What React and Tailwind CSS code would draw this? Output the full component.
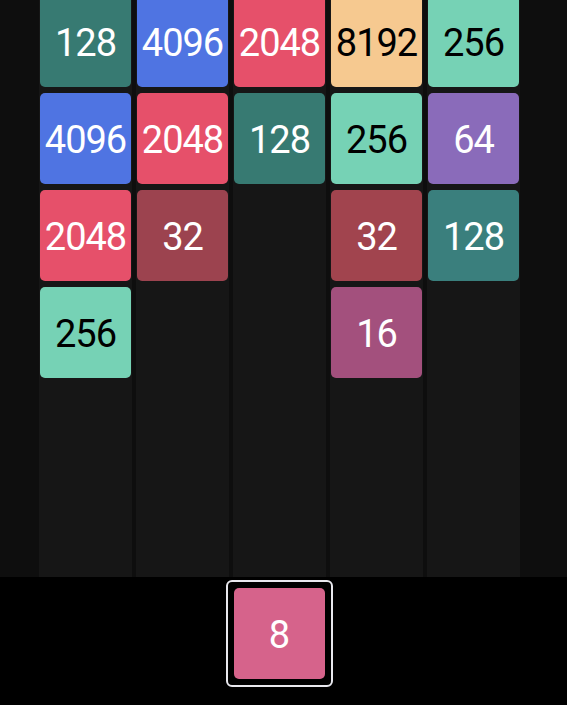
const COLORS = {
  16: { bg: 'bg-[#a3507d]', text: 'text-white' },
  32: { bg: 'bg-[#9c434f]', text: 'text-white' },
  64: { bg: 'bg-[#8a6bba]', text: 'text-white' },
  128: { bg: 'bg-[#377a72]', text: 'text-white' },
  256: { bg: 'bg-[#76d2b5]', text: 'text-black' },
  2048: { bg: 'bg-[#e6506a]', text: 'text-white' },
  4096: { bg: 'bg-[#4f74e2]', text: 'text-white' },
  8192: { bg: 'bg-[#f6c990]', text: 'text-black' },
  8: { bg: 'bg-[#d6638b]', text: 'text-white' },
}

const columns = [
  [128, 4096, 2048, 256],
  [4096, 2048, 32],
  [2048, 128],
  [8192, 256, 32, 16],
  [256, 64, 128],
]

function Tile({ value, first, tint }) {
  const c = COLORS[value]
  return (
    <div
      className={`w-[91px] h-[91px] shrink-0 rounded-[5px] flex items-center justify-center pt-[3px] text-[38px] font-normal tracking-[-1px] ${tint || c.bg} ${c.text} ${first ? '-mt-[4px]' : ''}`}
    >
      {value}
    </div>
  )
}

export default function App() {
  return (
    <div
      className="w-[567px] h-[705px] overflow-hidden bg-[#0e0e0e] flex flex-col"
      style={{ fontFamily: 'Roboto, "Open Sans", sans-serif' }}
    >
      <div className="h-[577px] shrink-0 pl-[39px] flex gap-[4px]">
        {columns.map((col, i) => (
          <div key={i} className="w-[93px] h-full bg-[#161616] flex flex-col items-center gap-[6px]">
            {col.map((v, j) => (
              <Tile
                key={j}
                value={v}
                first={j === 0}
                tint={i === 4 && j === 2 ? 'bg-[#3a7f7d]' : i === 3 && j === 2 ? 'bg-[#a1444e]' : null}
              />
            ))}
          </div>
        ))}
      </div>
      <div className="flex-1 bg-black flex justify-center pt-[3px]">
        <div className="h-[107px] w-[107px] ml-[-9px] rounded-[6px] border-2 border-[#e8e8ee] flex items-center justify-center">
          <Tile value={8} />
        </div>
      </div>
    </div>
  )
}
